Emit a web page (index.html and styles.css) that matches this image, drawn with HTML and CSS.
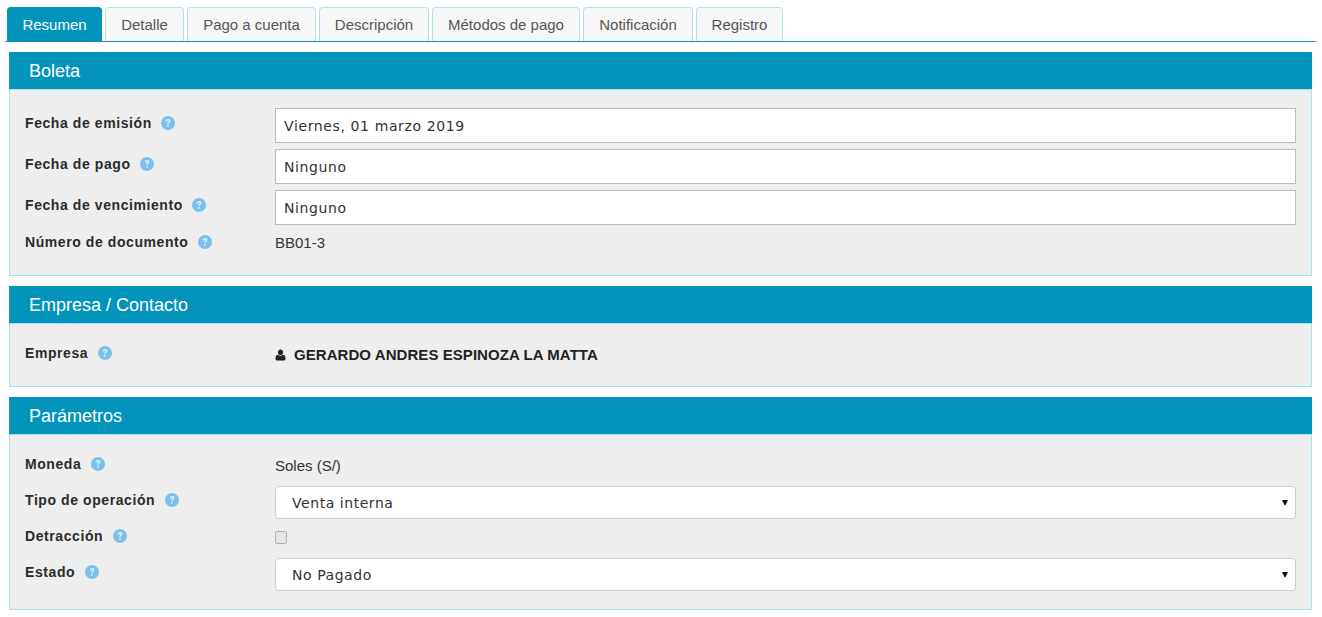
FILE: index.html
```html
<!DOCTYPE html>
<html lang="es">
<head>
<meta charset="utf-8">
<title>Boleta</title>
<link rel="stylesheet" href="styles.css">
</head>
<body>
<svg class="defs" width="0" height="0" aria-hidden="true">
  <symbol id="help" viewBox="0 0 14 14">
    <circle cx="7" cy="7" r="7" fill="#7cc0ee"/>
    <path d="M4.700 5.400c.1-1.500 1.100-2.300 2.400-2.300 1.300 0 2.300.8 2.300 2 0 1.600-1.800 1.700-1.800 3H6.200c0-2 1.600-2.100 1.600-3 0-.4-.3-.7-.8-.7-.5 0-.8.3-.9 1z" fill="#dceffb"/>
    <rect x="6.200" y="9" width="1.500" height="1.700" fill="#dceffb"/>
  </symbol>
</svg>
<nav class="tabs">
  <a class="tab active">Resumen</a>
  <a class="tab t-detalle">Detalle</a>
  <a class="tab t-pago">Pago a cuenta</a>
  <a class="tab t-desc">Descripción</a>
  <a class="tab t-metodos">Métodos de pago</a>
  <a class="tab t-notif">Notificación</a>
  <a class="tab t-reg">Registro</a>
</nav>

<section class="panel">
  <h2 class="panel-title">Boleta</h2>
  <div class="panel-body boleta">
    <div class="row">
      <label class="label">Fecha de emisión <svg class="help"><use href="#help"/></svg></label>
      <div class="field">Viernes, 01 marzo 2019</div>
    </div>
    <div class="row">
      <label class="label">Fecha de pago <svg class="help"><use href="#help"/></svg></label>
      <div class="field">Ninguno</div>
    </div>
    <div class="row">
      <label class="label">Fecha de vencimiento <svg class="help"><use href="#help"/></svg></label>
      <div class="field">Ninguno</div>
    </div>
    <div class="row static">
      <label class="label">Número de documento <svg class="help"><use href="#help"/></svg></label>
      <div class="value">BB01-3</div>
    </div>
  </div>
</section>

<section class="panel">
  <h2 class="panel-title">Empresa / Contacto</h2>
  <div class="panel-body empresa">
    <div class="row static">
      <label class="label">Empresa <svg class="help"><use href="#help"/></svg></label>
      <div class="value company">
        <svg class="user" viewBox="0 0 12 13"><path d="M6 .5c1.700 0 2.800 1.300 2.800 3S7.700 6.800 6 6.800 3.200 5.200 3.200 3.500 4.300.5 6 .5zM3.300 6.300C4 7.100 4.900 7.500 6 7.500s2-.4 2.700-1.200c1.800.2 2.800 1.700 2.800 3.900 0 1.500-1 2.300-2.200 2.300H2.700C1.500 12.500.5 11.700.5 10.200c0-2.200 1-3.700 2.800-3.900z" fill="#222"/></svg>
        GERARDO ANDRES ESPINOZA LA MATTA
      </div>
    </div>
  </div>
</section>

<section class="panel">
  <h2 class="panel-title">Parámetros</h2>
  <div class="panel-body params">
    <div class="row-p">
      <label class="label">Moneda <svg class="help"><use href="#help"/></svg></label>
      <div class="value">Soles (S/)</div>
    </div>
    <div class="row-p">
      <label class="label">Tipo de operación <svg class="help"><use href="#help"/></svg></label>
      <div class="select">Venta interna<span class="caret"></span></div>
    </div>
    <div class="row-p">
      <label class="label">Detracción <svg class="help"><use href="#help"/></svg></label>
      <span class="check"></span>
    </div>
    <div class="row-p">
      <label class="label">Estado <svg class="help"><use href="#help"/></svg></label>
      <div class="select">No Pagado<span class="caret"></span></div>
    </div>
  </div>
</section>
</body>
</html>
```

FILE: styles.css
```css
* { box-sizing: border-box; }
html, body { margin: 0; padding: 0; background: #fff; }
body {
  width: 1322px;
  height: 617px;
  overflow: hidden;
  font-family: "Liberation Sans", Arial, sans-serif;
  color: #333;
  padding-top: 7px;
}
.defs { position: absolute; }

.tabs {
  display: flex;
  gap: 3px;
  margin: 0 6px 0 5px;
  padding-left: 2px;
  height: 35px;
  border-bottom: 1px solid #0f8fb4;
}
.tab {
  height: 34px;
  display: flex;
  align-items: center;
  justify-content: center;
  font-size: 15px;
  color: #555;
  background: #f7f7f7;
  border: 1px solid #b6e0ee;
  border-bottom: 0;
  border-radius: 4px 4px 0 0;
}
.tab.active { width: 95px; background: #0294bb; border-color: #0294bb; color: #fff; }
.t-detalle { width: 79px; }
.t-pago { width: 129px; }
.t-desc { width: 110px; }
.t-metodos { width: 148px; }
.t-notif { width: 110px; }
.t-reg { width: 87px; }

.panel { margin: 10px 10px 0 9px; }
.panel-title {
  margin: 0;
  height: 37px;
  padding-left: 20px;
  background: #0294bb;
  color: #fff;
  font-size: 18px;
  font-weight: 400;
  line-height: 38px;
}
.panel-body {
  background: #eeeeee;
  border: 1px solid #a9e0ef;
  padding: 0 15px;
}
.boleta { height: 187px; padding-top: 18px; }
.empresa { height: 64px; padding-top: 20px; }
.params { height: 176px; padding-top: 15px; }

.row { display: flex; margin-bottom: 6px; }
.row-p { display: flex; height: 33px; margin-bottom: 3px; }
.label {
  width: 250px;
  flex: none;
  padding-top: 6px;
  font-size: 14px;
  letter-spacing: 0.58px;
  font-weight: 700;
  color: #2b2b2b;
  line-height: 18px;
  white-space: nowrap;
}
.row-p .label { padding-top: 5px; }
.help { width: 14px; height: 14px; margin-left: 5px; vertical-align: -2px; }
.field {
  flex: 1;
  height: 35px;
  padding-left: 8px;
  background: #fff;
  border: 1px solid #bbb;
  font-family: "DejaVu Sans", Verdana, sans-serif;
  font-size: 14px;
  letter-spacing: 0.62px;
  line-height: 34px;
  color: #333;
}
.select {
  flex: 1;
  height: 33px;
  position: relative;
  padding-left: 16px;
  background: #fff;
  border: 1px solid #ccc;
  border-radius: 4px;
  font-family: "DejaVu Sans", Verdana, sans-serif;
  font-size: 14px;
  letter-spacing: 0.55px;
  line-height: 32px;
  color: #333;
}
.caret {
  position: absolute;
  right: 7px;
  top: 13px;
  border-left: 3px solid transparent;
  border-right: 3px solid transparent;
  border-top: 6px solid #111;
}
.static { margin-bottom: 0; }
.static .label { padding-top: 0; }
.value { font-size: 15px; line-height: 18px; color: #333; }
.row-p .value { padding-top: 7px; height: 25px; }
.boleta .static { margin-top: 8px; }
.boleta .static .value { padding-top: 1px; }
.company { display: flex; align-items: center; font-weight: 700; color: #222; gap: 8px; height: 18px; margin-top: 2px; letter-spacing: 0.06px; }
.user { width: 11px; height: 12px; }
.check {
  width: 12px;
  height: 13px;
  margin-top: 9px;
  background: #e6e6e6;
  border: 1px solid #b0b0b0;
  border-radius: 2px;
}
```
